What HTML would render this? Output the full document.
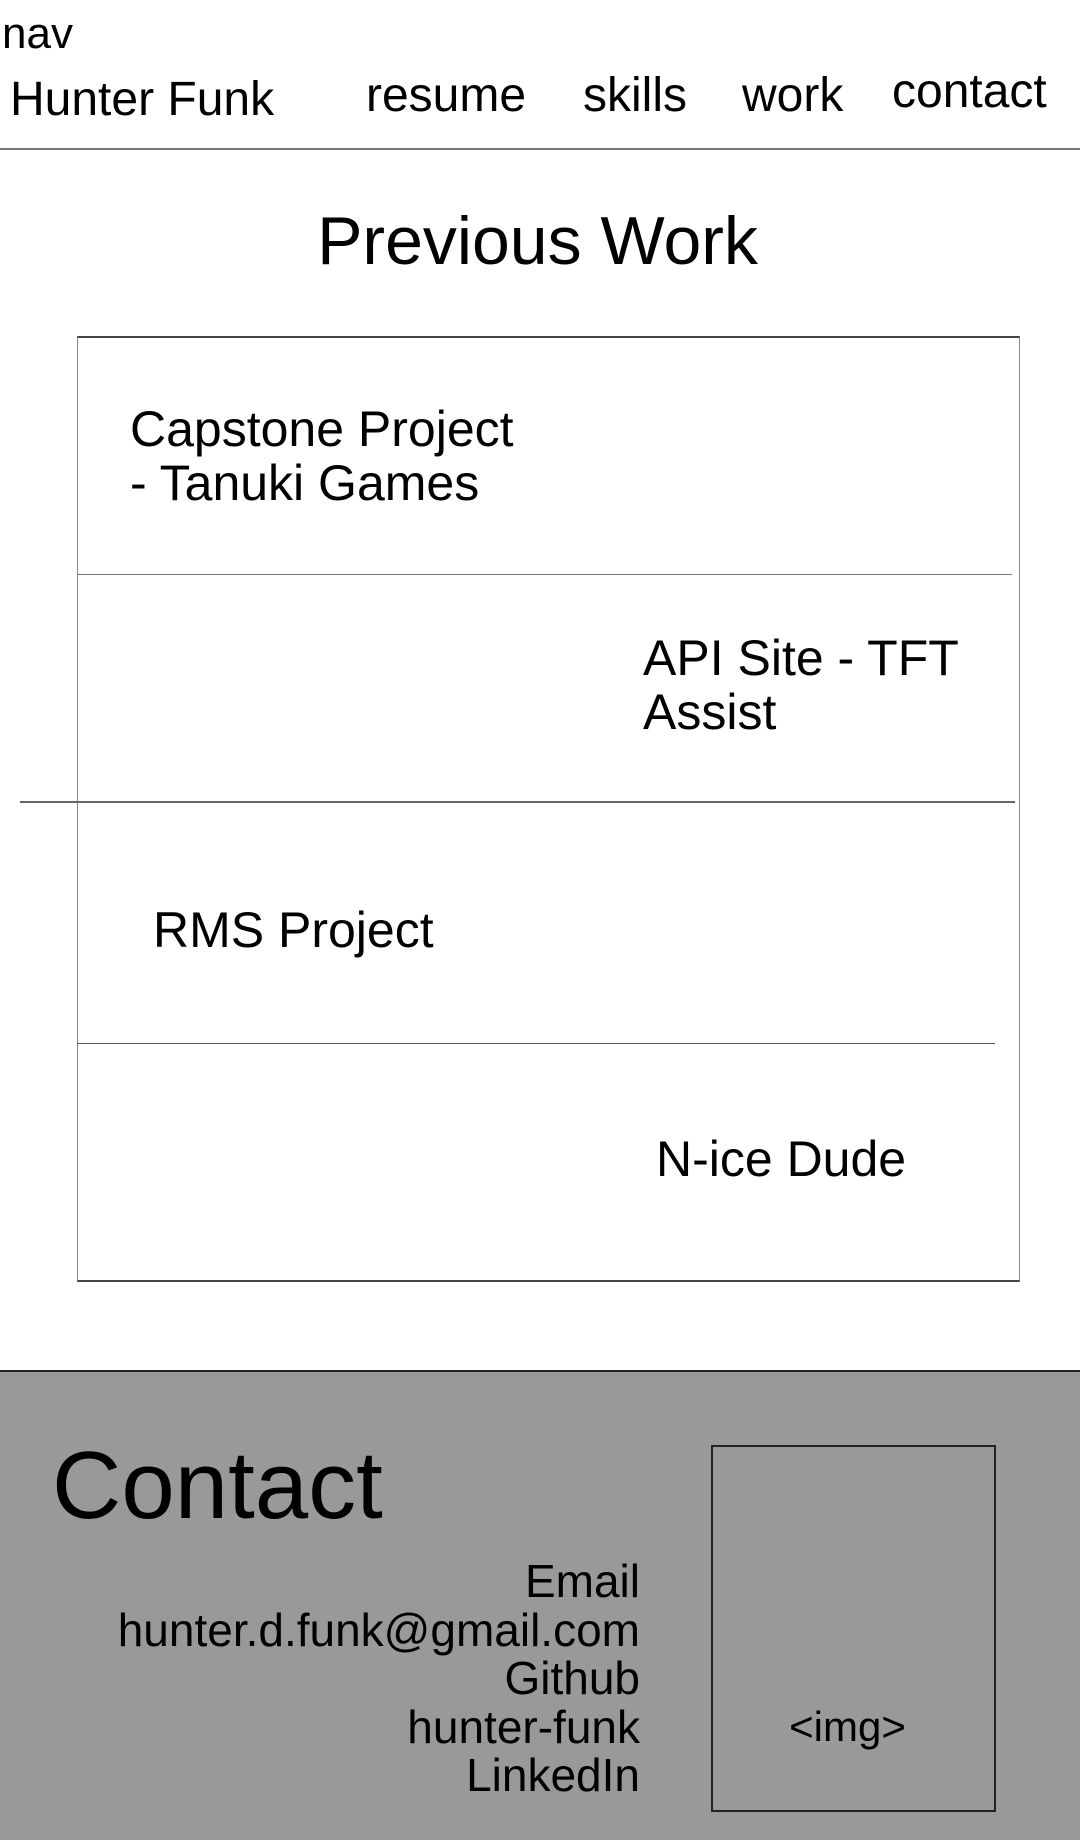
<!DOCTYPE html>
<html><head><meta charset="utf-8"><style>
*{margin:0;padding:0;box-sizing:border-box}
body{width:1080px;height:1840px;position:relative;background:#fff;font-family:"Liberation Sans",sans-serif;color:#000;overflow:hidden}
.t{position:absolute;white-space:nowrap;line-height:1}
.l{position:absolute;background:#444}
</style></head><body>
<div class="t" style="left:2px;top:12px;font-size:44px">nav</div>
<div class="t" style="left:10px;top:76px;font-size:48px">Hunter Funk</div>
<div class="t" style="left:366px;top:72px;font-size:48px">resume</div>
<div class="t" style="left:583px;top:72px;font-size:48px">skills</div>
<div class="t" style="left:742px;top:72px;font-size:48px">work</div>
<div class="t" style="left:892px;top:68px;font-size:48px">contact</div>
<div class="l" style="left:0;top:148px;width:1080px;height:2px;background:#777"></div>
<div class="t" style="left:0;width:1075px;text-align:center;top:207px;font-size:68px">Previous Work</div>
<div style="position:absolute;left:77px;top:336px;width:943px;height:946px;border:1px solid #888;border-top:2px solid #444;border-bottom:2px solid #444"></div>
<div class="l" style="left:77px;top:574px;width:935px;height:1px;background:#777"></div>
<div class="l" style="left:20px;top:801px;width:995px;height:2px;background:#666"></div>
<div class="l" style="left:77px;top:1043px;width:918px;height:1px;background:#555"></div>
<div class="t" style="left:130px;top:402px;font-size:50px;line-height:54px">Capstone Project<br>- Tanuki Games</div>
<div class="t" style="left:643px;top:631px;font-size:50px;line-height:54px">API Site - TFT<br>Assist</div>
<div class="t" style="left:153px;top:905px;font-size:50px">RMS Project</div>
<div class="t" style="left:656px;top:1134px;font-size:50px">N-ice Dude</div>
<div style="position:absolute;left:0;top:1370px;width:1080px;height:470px;background:#999;border-top:2px solid #222"></div>
<div class="t" style="left:52px;top:1438px;font-size:96px">Contact</div>
<div class="t" style="left:0;width:640px;text-align:right;top:1557px;font-size:46px;line-height:48.5px">Email<br>hunter.d.funk@gmail.com<br>Github<br>hunter-funk<br>LinkedIn</div>
<div style="position:absolute;left:711px;top:1445px;width:285px;height:367px;border:2px solid #222"></div>
<div class="t" style="left:705px;width:285px;text-align:center;top:1706px;font-size:42px">&lt;img&gt;</div>
</body></html>
